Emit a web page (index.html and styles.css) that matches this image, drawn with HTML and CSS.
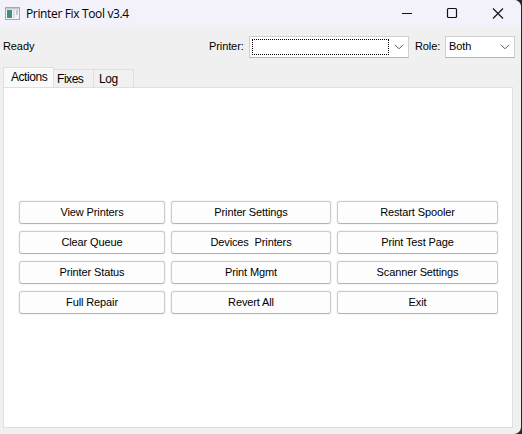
FILE: index.html
```html
<!DOCTYPE html>
<html lang="en">
<head>
    <meta charset="UTF-8">
    <title>Printer Fix Tool v3.4</title>
    <link rel="stylesheet" href="styles.css">
</head>
<body>
    <div class="window">
        <div class="titlebar">
            <svg class="app-icon" width="15" height="13" viewBox="0 0 15 13">
                <rect x="0.5" y="0.5" width="14" height="12" fill="#f4f5f6" stroke="#a3aab0"/>
                <rect x="1" y="1" width="13" height="1.5" fill="#c3c9ce"/>
                <rect x="2" y="3" width="5" height="8" fill="#458c7c"/>
                <rect x="8" y="3" width="2" height="8" fill="#dcdde0"/>
                <rect x="11" y="3" width="2" height="5" fill="#c5c8cc"/>
            </svg>
            <span class="title">Printer Fix Tool v3.4</span>
            <div class="controls">
                <svg width="46" height="27" viewBox="0 0 46 27"><path d="M18 13.5h10" stroke="#111"/></svg>
                <svg width="46" height="27" viewBox="0 0 46 27"><rect x="17.5" y="8.5" width="9" height="9" rx="1" fill="none" stroke="#111" stroke-width="1.2"/></svg>
                <svg width="46" height="27" viewBox="0 0 46 27"><path d="M17 8.5l10 10M27 8.5l-10 10" stroke="#111" stroke-width="1.1"/></svg>
            </div>
        </div>
        <div class="toolbar">
            <span class="status">Ready</span>
            <span class="label printer-label">Printer:</span>
            <div class="combo printer">
                <div class="focus"></div>
                <svg width="10" height="6" viewBox="0 0 10 6"><path d="M1 .8l4 4 4-4" fill="none" stroke="#555"/></svg>
            </div>
            <span class="label role-label">Role:</span>
            <div class="combo role">
                <span>Both</span>
                <svg width="10" height="6" viewBox="0 0 10 6"><path d="M1 .8l4 4 4-4" fill="none" stroke="#555"/></svg>
            </div>
        </div>
        <div class="tabs">
            <div class="tab active">Actions</div>
            <div class="tab fixes">Fixes</div>
            <div class="tab log">Log</div>
        </div>
        <div class="pane">
            <div class="actions">
                <button>View Printers</button>
                <button>Printer Settings</button>
                <button>Restart Spooler</button>
                <button>Clear Queue</button>
                <button>Devices&nbsp; Printers</button>
                <button>Print Test Page</button>
                <button>Printer Status</button>
                <button>Print Mgmt</button>
                <button>Scanner Settings</button>
                <button>Full Repair</button>
                <button>Revert All</button>
                <button>Exit</button>
            </div>
        </div>
    </div>
</body>
</html>
```
FILE: styles.css
```css
* {
    box-sizing: border-box;
}

body {
    margin: 0;
    height: 434px;
    overflow: hidden;
    background-color: #25262c;
    font-family: "Liberation Sans", Arial, sans-serif;
    font-size: 11px;
    color: #000;
}

.window {
    width: 521px;
    height: 434px;
    background-color: #f0f0f0;
    border-radius: 0 7px 7px 0;
    overflow: hidden;
}

.titlebar {
    display: flex;
    align-items: center;
    height: 28px;
    padding-left: 5px;
    background-color: #f3f1fa;
}

.app-icon {
    margin-top: -2px;
}

.title {
    margin: -1px 0 0 6px;
    font-family: "Open Sans", "Noto Sans", sans-serif;
    font-size: 12px;
    letter-spacing: -0.35px;
    white-space: nowrap;
}

.controls {
    display: flex;
    margin-left: auto;
    margin-right: -1px;
    height: 27px;
    align-self: flex-start;
}

.toolbar {
    display: flex;
    align-items: center;
    height: 37px;
    padding: 0 6px 0 3px;
    letter-spacing: -0.1px;
}

.status,
.label,
.role span {
    position: relative;
    top: -1px;
}

.label {
    width: 34px;
    margin-right: 6px;
    white-space: nowrap;
}

.printer-label {
    margin-left: auto;
}

.role-label {
    width: 24px;
    margin-left: 6px;
}

.combo {
    display: flex;
    align-items: center;
    justify-content: space-between;
    height: 22px;
    background-color: #fff;
    border: 1px solid #d0d0d0;
    border-bottom-color: #b8b8b8;
    border-radius: 1px;
    padding: 0 4px 0 2px;
}

.printer {
    width: 160px;
}

.focus {
    width: 137px;
    height: 16px;
    border: 1px dotted #000;
}

.role {
    width: 70px;
    padding-left: 3px;
}

.tabs {
    display: flex;
    align-items: flex-end;
    height: 22px;
    padding-left: 3px;
}

.tab {
    height: 18px;
    padding-top: 2px;
    background-color: #f1f1f1;
    border: 1px solid #dfdfdf;
    border-left: none;
    border-bottom: none;
    font-size: 12px;
    letter-spacing: -0.45px;
    line-height: 14px;
}

.active {
    width: 51px;
    height: 20px;
    padding: 2px 0 0 7px;
    background-color: #fafafa;
    border-left: 1px solid #dfdfdf;
}

.fixes {
    width: 40px;
    padding-left: 3px;
}

.log {
    width: 40px;
    padding-left: 5px;
}

.pane {
    display: flex;
    align-items: center;
    justify-content: center;
    width: 510px;
    height: 341px;
    margin-left: 3px;
    background-color: #fff;
    border: 1px solid #dfdfdf;
}

.actions {
    display: grid;
    grid-template-columns: 146px 160px 161px;
    grid-auto-rows: 23px;
    gap: 7px 6px;
    padding-left: 1px;
    padding-bottom: 1px;
}

button {
    padding: 0 0 1px;
    background-color: #fdfdfd;
    border: 1px solid #cbcbcb;
    border-bottom-color: #b4b4b4;
    border-radius: 3px;
    box-shadow: 0 0 0 1px #f6f6f6;
    font-family: inherit;
    font-size: 11px;
    color: #000;
    letter-spacing: -0.12px;
}
```
